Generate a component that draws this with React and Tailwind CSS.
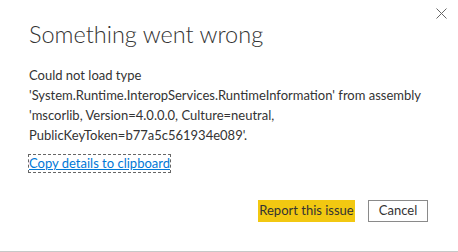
export default function App() {
  return (
    <div className="relative w-[458px] h-[252px] bg-white border-b border-[#c8c8c8] text-[#333333]" style={{ fontFamily: 'Lato, "Open Sans", sans-serif' }}>
      <button className="absolute right-[11px] top-[7px] w-[12px] h-[12px] flex items-center justify-center">
        <svg width="11" height="11" viewBox="0 0 11 11">
          <path d="M0.5 0.5L10.5 10.5M10.5 0.5L0.5 10.5" stroke="#666" strokeWidth="1" />
        </svg>
      </button>
      <div className="pl-[29px] pr-[20px] pt-[18px] flex flex-col">
        <h1 className="text-[23.5px] font-light leading-[32px] whitespace-nowrap">Something went wrong</h1>
        <p className="mt-[15px] text-[13px] leading-[20px] whitespace-nowrap">
          Could not load type<br />
          'System.Runtime.InteropServices.RuntimeInformation' from assembly<br />
          'mscorlib, Version=4.0.0.0, Culture=neutral,<br />
          PublicKeyToken=b77a5c561934e089'.
        </p>
        <div className="mt-[10px] flex">
          <span className="block outline outline-1 outline-dashed outline-[#666] text-[13px] leading-[17px] text-[#0078d7] underline">Copy details to clipboard</span>
        </div>
        <div className="mt-[28px] flex justify-end gap-[13px] pr-[10px]">
          <button className="w-[97px] h-[22px] bg-[#f2c811] text-[13px] text-[#333] whitespace-nowrap">Report this issue</button>
          <button className="w-[60px] h-[22px] border border-[#8a8a8a] text-[13px] text-[#333] bg-white">Cancel</button>
        </div>
      </div>
    </div>
  );
}
